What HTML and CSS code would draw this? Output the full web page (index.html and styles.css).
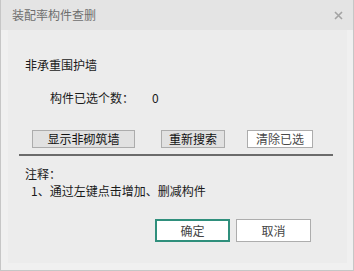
FILE: index.html
```html
<!DOCTYPE html>
<html>
<head>
<meta charset="utf-8">
<link rel="stylesheet" href="styles.css">
</head>
<body>
<div class="window">
  <div class="titlebar">
    <span class="title">装配率构件查删</span>
    <svg class="close" width="9" height="9" viewBox="0 0 9 9"><path d="M1 1L8 8M8 1L1 8" stroke="#a3a3a3" stroke-width="1.6"/></svg>
  </div>
  <div class="panel">
    <div class="heading">非承重围护墙</div>
    <div class="count"><span>构件已选个数：</span><span class="num">0</span></div>
    <div class="btnrow">
      <button class="btn gray w1">显示非砌筑墙</button>
      <button class="btn gray w2">重新搜索</button>
      <button class="btn white w3">清除已选</button>
    </div>
    <div class="sep"></div>
    <div class="note">注释：</div>
    <div class="item">1、通过左键点击增加、删减构件</div>
    <div class="actions">
      <button class="abtn ok">确定</button>
      <button class="abtn cancel">取消</button>
    </div>
  </div>
</div>
</body>
</html>
```
FILE: styles.css
```css
* { box-sizing: border-box; }
body { margin: 0; background: #f0f0f0; font-family: "Noto Sans CJK SC", "Noto Sans", sans-serif; font-size: 12px; color: #1a1a1a; }
.window { width: 354px; height: 271px; border: 1px solid #c6c6c6; border-top: none; background: #f0f0f0; display: flex; flex-direction: column; }
.titlebar { height: 30px; background: #e4e4e4; display: flex; align-items: center; justify-content: space-between; padding: 0 10px 0 11px; }
.title { color: #6e6e6e; font-size: 12px; line-height: 16px; }
.close { display: block; }
.panel { flex: 1; margin: 0 6px 7px 7px; background: #ececec; display: flex; flex-direction: column; }
.heading { margin: 27px 0 0 17px; line-height: 16px; }
.count { margin: 17px 0 0 42px; line-height: 16px; display: flex; }
.count .num { margin-left: 18px; }
.btnrow { margin: 24px 0 0 24px; display: flex; }
.btn { height: 18px; font: inherit; font-size: 12px; line-height: 14px; padding: 0; border: 1px solid #acacac; color: #111; }
.btn.gray { background: #e1e1e1; }
.btn.white { background: #ffffff; color: #4a4a4a; }
.w1 { width: 103px; }
.w2 { width: 64px; margin-left: 26px; }
.w3 { width: 66px; margin-left: 22px; }
.sep { margin: 6px 0 0 11px; width: 314px; height: 2px; background: #6b6b6b; }
.note { margin: 10px 0 0 17px; line-height: 16px; }
.item { margin: 1px 0 0 23px; line-height: 16px; }
.actions { margin: 20px 0 0 147px; display: flex; gap: 6px; }
.abtn { width: 75px; height: 23px; background: #fff; font: inherit; font-size: 12px; color: #444; padding: 0; }
.ok { border: 2px solid #2f8f7c; }
.cancel { border: 1px solid #adadad; }
```
